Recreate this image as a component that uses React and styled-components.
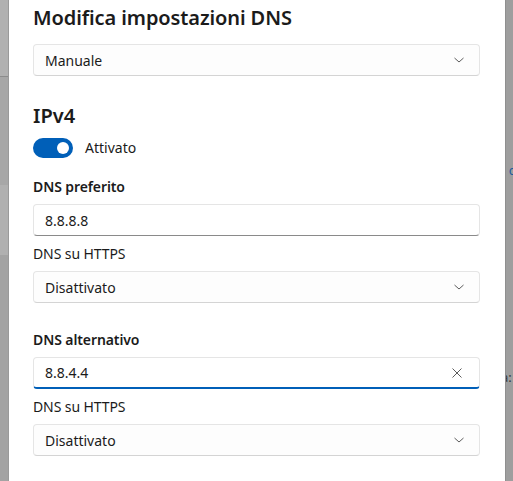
import React from 'react';
import styled, { createGlobalStyle } from 'styled-components';

const Global = createGlobalStyle`
  html, body {
    margin: 0;
    padding: 0;
    background: #a0a0a0;
  }
  body {
    font-family: "Segoe UI", "Noto Sans", "Open Sans", sans-serif;
    color: #1b1b1b;
  }
`;

const Screen = styled.div`
  display: flex;
  width: 513px;
  height: 481px;
  overflow: hidden;
`;

const LeftStrip = styled.div`
  width: 9px;
  flex: none;
  display: flex;
  flex-direction: column;
  background: #a3a3a3;
  border-right: 1px solid #9a9a9a;
  box-sizing: border-box;
`;

const StripBlock = styled.div`
  height: ${p => p.h}px;
  flex: none;
  background: ${p => p.bg};
  border-bottom: ${p => (p.line ? '1px solid #8c8c8c' : 'none')};
`;

const RightStrip = styled.div`
  flex: 1;
  background: #9e9e9e;
  border-left: 1px solid #8f8f8f;
  overflow: hidden;
  display: flex;
  flex-direction: column;
  font-size: 13px;
  white-space: nowrap;
`;

const Peek = styled.div`
  margin-top: ${p => p.top}px;
  margin-left: ${p => p.left}px;
  color: ${p => p.color};
  line-height: 16px;
`;

const Dialog = styled.div`
  width: 496px;
  flex: none;
  background: #ffffff;
  padding: 3px 25px 0 24px;
  box-sizing: border-box;
`;

const Title = styled.h1`
  margin: 0;
  font-size: 20px;
  font-weight: 600;
  line-height: 30px;
  letter-spacing: -0.1px;
`;

const Section = styled.h2`
  margin: 25px 0 0;
  font-size: 20px;
  font-weight: 600;
  line-height: 30px;
`;

const Label = styled.div`
  font-size: 14px;
  line-height: 20px;
  font-weight: ${p => (p.strong ? 600 : 400)};
  margin-top: ${p => p.gap}px;
  letter-spacing: -0.1px;
`;

const Field = styled.div`
  margin-top: ${p => p.gap}px;
  height: 32px;
  box-sizing: border-box;
  display: flex;
  align-items: center;
  justify-content: space-between;
  padding: 0 14px 0 11px;
  border: 1px solid #e5e5e5;
  border-bottom: ${p => (p.focused ? '2px solid #005fb8' : p.input ? '1px solid #8a8a8a' : '1px solid #d4d4d4')};
  border-radius: 4px;
  background: ${p => (p.input ? '#ffffff' : '#fdfdfd')};
  font-size: 14px;
`;

const Toggle = styled.div`
  display: flex;
  align-items: center;
  gap: 12px;
  margin-top: 7px;
  font-size: 14px;
  line-height: 20px;
`;

const Track = styled.div`
  width: 40px;
  height: 20px;
  border-radius: 10px;
  background: #005fb8;
  display: flex;
  align-items: center;
  justify-content: flex-end;
  padding-right: 4px;
  box-sizing: border-box;
`;

const Knob = styled.div`
  width: 12px;
  height: 12px;
  border-radius: 50%;
  background: #ffffff;
`;

const Chevron = () => (
  <svg width="12" height="8" viewBox="0 0 12 8">
    <path d="M1.5 2 L6 6 L10.5 2" fill="none" stroke="#5c5c5c" strokeWidth="1" />
  </svg>
);

const Clear = () => (
  <svg width="12" height="12" viewBox="0 0 12 12" style={{ marginRight: 2 }}>
    <path d="M1.5 1.5 L10.5 10.5 M10.5 1.5 L1.5 10.5" fill="none" stroke="#5c5c5c" strokeWidth="1" />
  </svg>
);

const Select = ({ value, gap }) => (
  <Field gap={gap}>
    <span>{value}</span>
    <Chevron />
  </Field>
);

export default function App() {
  return (
    <Screen>
      <Global />
      <LeftStrip>
        <StripBlock h={76} bg="#b1b1b1" line />
        <StripBlock h={108} bg="#a7a7a7" />
        <StripBlock h={70} bg="#b0b0b0" />
      </LeftStrip>
      <Dialog>
        <Title>Modifica impostazioni DNS</Title>
        <Select value="Manuale" gap={11} />
        <Section>IPv4</Section>
        <Toggle>
          <Track><Knob /></Track>
          Attivato
        </Toggle>
        <Label strong gap={19}>DNS preferito</Label>
        <Field input gap={7}>8.8.8.8</Field>
        <Label gap={8}>DNS su HTTPS</Label>
        <Select value="Disattivato" gap={7} />
        <Label strong gap={27}>DNS alternativo</Label>
        <Field input focused gap={7}>
          <span>8.8.4.4</span>
          <Clear />
        </Field>
        <Label gap={8}>DNS su HTTPS</Label>
        <Select value="Disattivato" gap={7} />
      </Dialog>
      <RightStrip>
        <Peek top={162} left={-4} color="#1f5b9c">i c</Peek>
        <Peek top={191} left={-5} color="#3a3a3a">a:</Peek>
      </RightStrip>
    </Screen>
  );
}
